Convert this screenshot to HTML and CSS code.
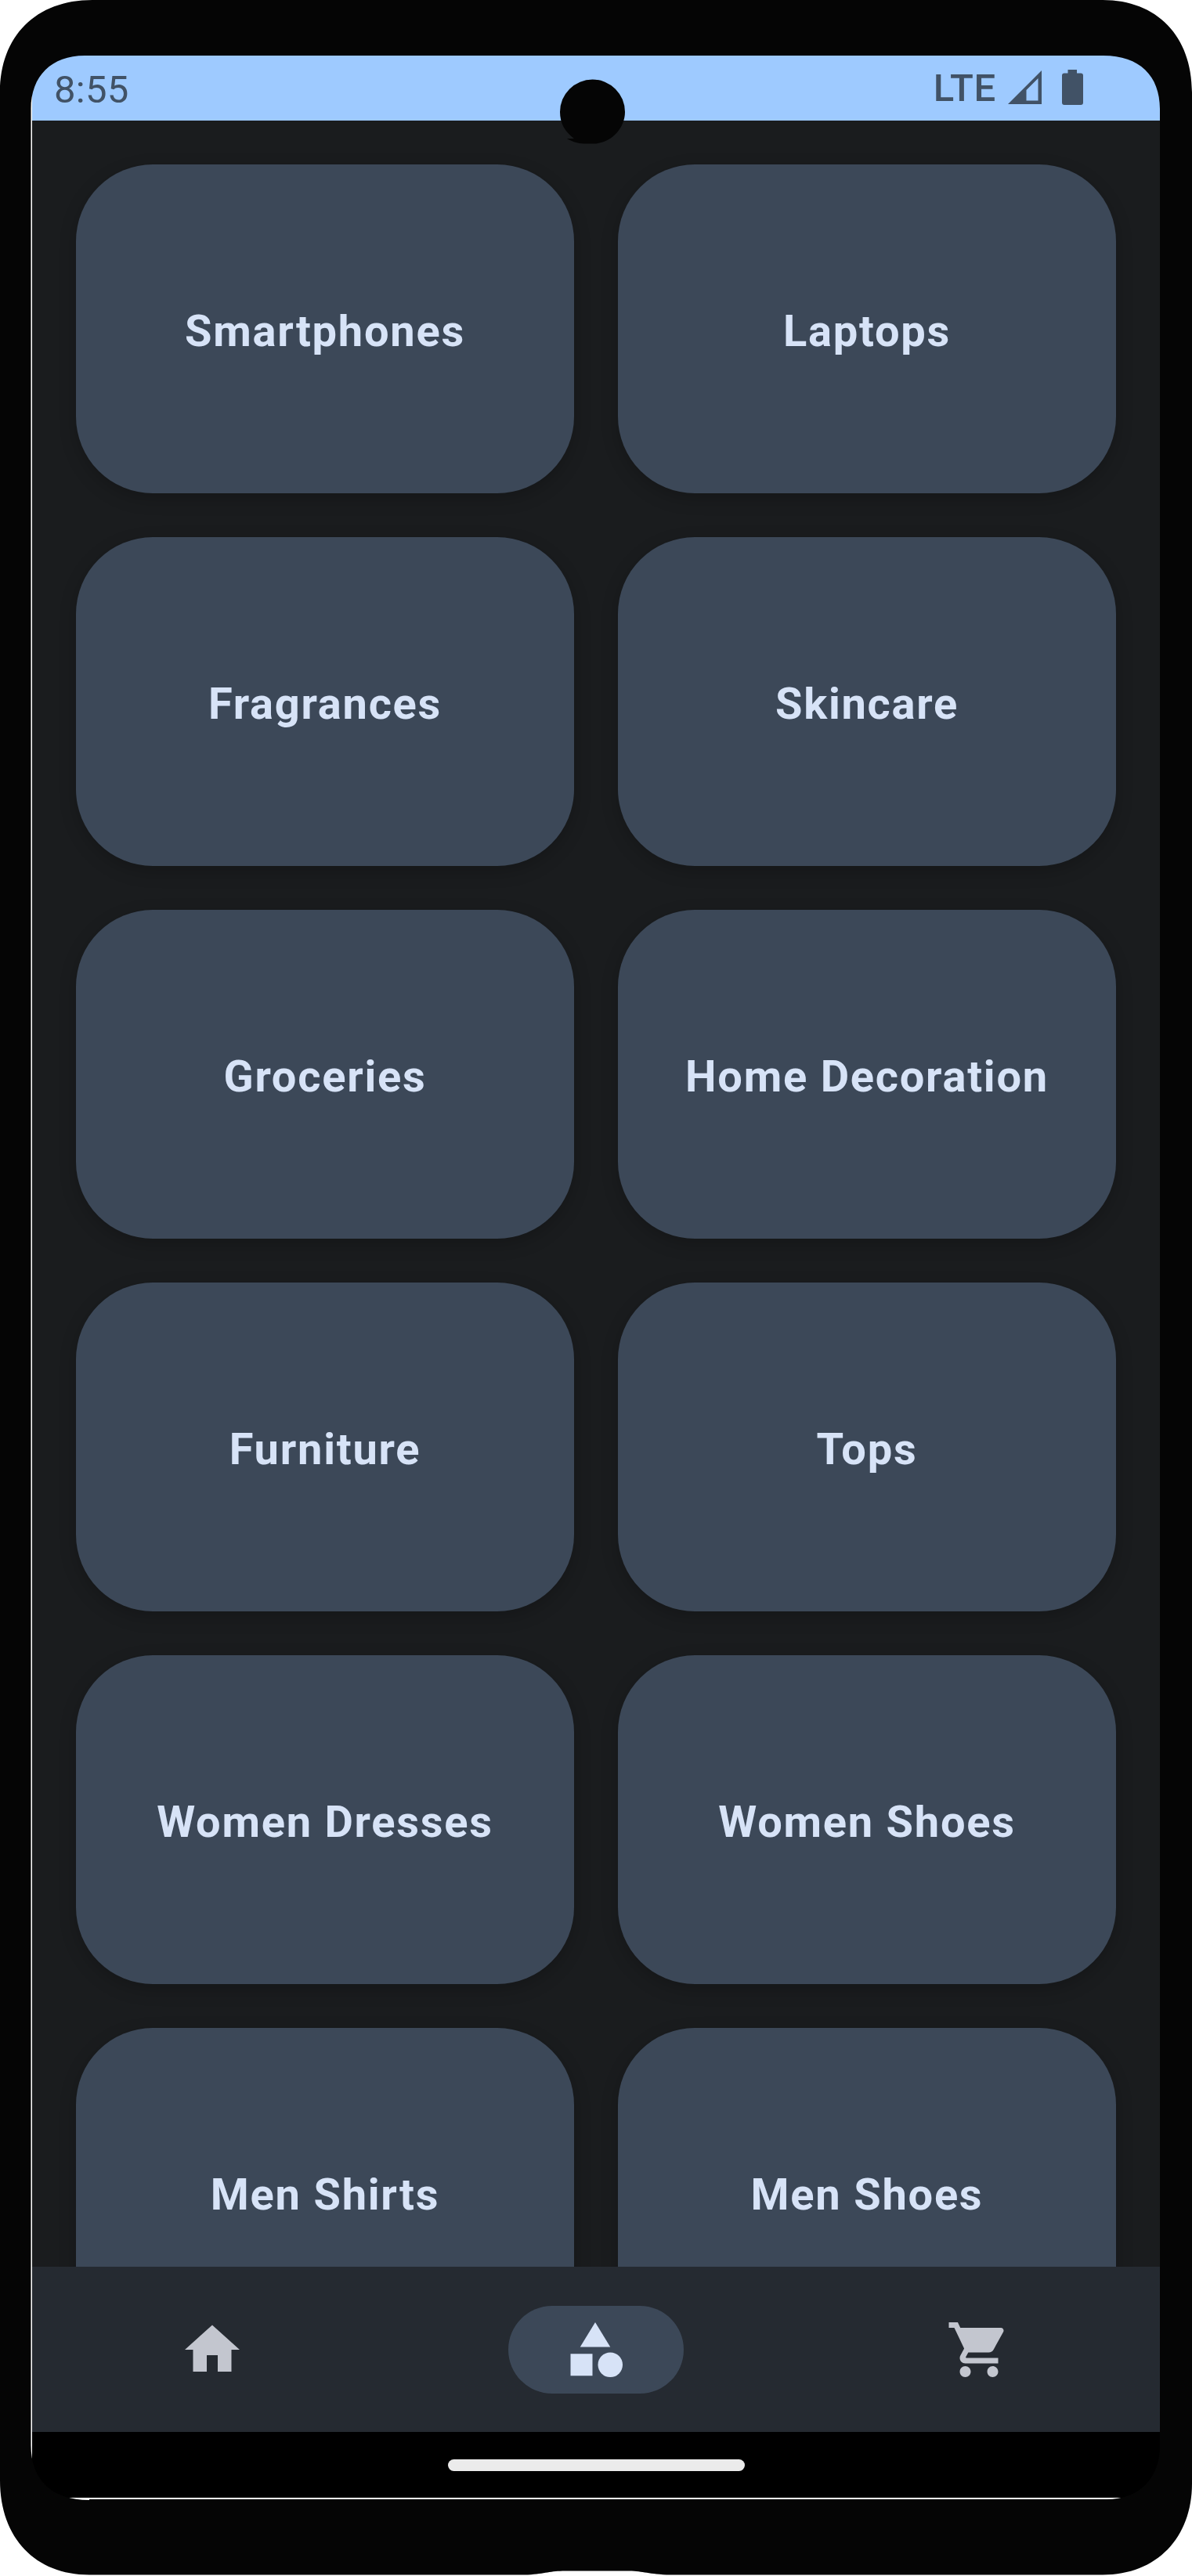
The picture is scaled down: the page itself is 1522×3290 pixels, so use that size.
FILE: index.html
```html
<!DOCTYPE html>
<html lang="en">
<head>
<meta charset="utf-8">
<title>Categories</title>
<link rel="stylesheet" href="styles.css">
</head>
<body>
<div class="device">
  <div class="screen">
    <header class="status">
      <span class="clock">8:55</span>
      <div class="indicators">
        <span class="network">LTE</span>
        <svg class="signal" width="43" height="43" viewBox="0 0 43 43"><path fill-rule="evenodd" d="M0 43L43 0V43ZM23.500 25V38.500H38.500V10Z"/></svg>
        <svg class="battery" width="27" height="45" viewBox="0 0 27 45"><path d="M7.500 0H19V4.500H24Q27 4.500 27 7.500V42Q27 45 24 45H3Q0 45 0 42V7.500Q0 4.500 3 4.500H7.500Z"/></svg>
      </div>
    </header>
    <main class="categories">
      <div class="card">Smartphones</div>
      <div class="card">Laptops</div>
      <div class="card">Fragrances</div>
      <div class="card">Skincare</div>
      <div class="card">Groceries</div>
      <div class="card">Home Decoration</div>
      <div class="card">Furniture</div>
      <div class="card">Tops</div>
      <div class="card">Women Dresses</div>
      <div class="card">Women Shoes</div>
      <div class="card">Men Shirts</div>
      <div class="card">Men Shoes</div>
    </main>
    <nav class="tabs">
      <a class="tab"><svg viewBox="0 0 24 24"><path d="M10 20v-6h4v6h5v-8h3L12 3 2 12h3v8z"/></svg></a>
      <a class="tab active"><svg viewBox="0 0 24 24"><path d="M12 2l-5.500 9h11z"/><circle cx="17.500" cy="17.500" r="4.500"/><path d="M3 13.500h8v8H3z"/></svg></a>
      <a class="tab"><svg viewBox="0 0 24 24"><path d="M7 18c-1.100 0-1.990.9-1.990 2S5.900 22 7 22s2-.9 2-2-.9-2-2-2zM1 2v2h2l3.600 7.590-1.350 2.450c-.16.280-.25.610-.25.960 0 1.100.9 2 2 2h12v-2H7.420c-.14 0-.25-.11-.25-.25l.03-.12.900-1.630h7.450c.750 0 1.410-.41 1.750-1.030l3.580-6.490c.08-.14.120-.31.120-.48 0-.55-.45-1-1-1H5.210l-.94-2H1zm16 16c-1.100 0-1.990.9-1.990 2s.89 2 1.990 2 2-.9 2-2-.9-2-2-2z"/></svg></a>
    </nav>
    <div class="gesture"><span class="handle"></span></div>
  </div>
  <!-- Phone bezel with the display cut out, camera on top -->
  <svg class="bezel" width="1522" height="3290" viewBox="0 0 1522 3290">
    <path fill-rule="evenodd" d="M0 118C0 46 46 0 118 0H1408C1477 0 1522 46 1522 118V3172C1522 3241 1477 3288.500 1408 3288.500H851C825 3287 820 3283.500 800 3283.500H722C702 3283.500 697 3287 674 3288.500H114C46 3288.500 0 3242 0 3168Z
      M39.500 139C39.500 97 66 71 108 71H1409C1455 71 1481 97 1481 139V3123C1481 3165 1455 3192 1413 3192H114V3193C66 3193 39.500 3167 39.500 3123Z"/>
    <path d="M715 143A41.500 41.500 0 0 1 798 143C798 164 780 183.500 757 183.500H746C738 183.500 729 180 724 177H733C721 168 715 157 715 143Z"/>
  </svg>
</div>
</body>
</html>
```
FILE: styles.css
```css
body {
  margin: 0;
  background: #fff;
  font-family: Roboto, "Liberation Sans", sans-serif;
}

.device {
  position: relative;
  box-sizing: border-box;
  width: 1522px;
  height: 3290px;
  padding: 71px 41px 100px;
  overflow: hidden;
}

.bezel {
  position: absolute;
  inset: 0;
  fill: #050505;
}

.screen {
  display: flex;
  flex-direction: column;
  height: 3119px;
  background: #1a1c1e;
}

.status {
  display: flex;
  flex: none;
  justify-content: space-between;
  box-sizing: border-box;
  height: 83px;
  padding: 0 98px 0 28px;
  background: #9ecaff;
  color: #415266;
  fill: #415266;
  font-size: 49px;
  line-height: 84px;
}

.clock {
  margin-top: 2px;
  letter-spacing: 0.3px;
}

.indicators {
  display: flex;
}

.network {
  font-weight: 500;
  letter-spacing: 0.7px;
}

.signal {
  margin: 19px 26px 0 15px;
}

.battery {
  margin-top: 18px;
}

.categories {
  display: grid;
  flex: 1;
  grid-template-columns: 1fr 1fr;
  grid-auto-rows: 420px;
  gap: 56px;
  min-height: 0;
  box-sizing: border-box;
  padding: 56px 56px 0;
  overflow: hidden;
}

.card {
  display: flex;
  align-items: center;
  justify-content: center;
  box-sizing: border-box;
  padding-top: 6px;
  border-radius: 98px;
  background: #3c4858;
  box-shadow: 0 7px 22px rgba(0, 0, 0, 0.2);
  color: #d7e3f7;
  font-size: 56px;
  font-weight: 700;
  letter-spacing: 1.75px;
  line-height: 84px;
}

.tabs {
  display: grid;
  flex: none;
  grid-template-columns: repeat(3, 1fr);
  column-gap: 28px;
  align-items: center;
  justify-items: center;
  height: 211px;
  background: #252a31;
}

.tab {
  display: flex;
  align-items: center;
  justify-content: center;
  width: 224px;
  height: 112px;
  border-radius: 56px;
  fill: #c3c6cf;
}

.tab.active {
  background: #3c4858;
  fill: #d7e3f7;
}

.tab svg {
  width: 84px;
  height: 84px;
  margin-right: 1.5px;
}

.gesture {
  display: flex;
  flex: none;
  align-items: center;
  justify-content: center;
  height: 84px;
  background: #000;
}

.handle {
  width: 379px;
  height: 15px;
  border-radius: 8px;
  background: #ebebeb;
}
```
